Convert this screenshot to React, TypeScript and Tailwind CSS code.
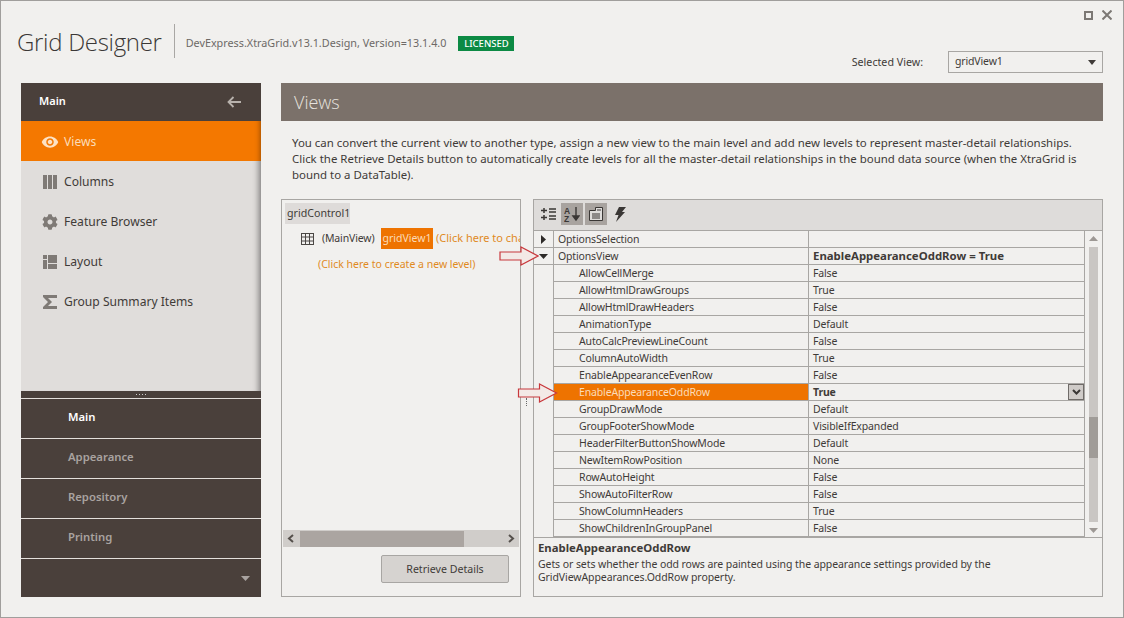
import React from "react";
import { FaCog } from "react-icons/fa";
import { MdVisibility } from "react-icons/md";

const F = "[font-family:'Noto_Sans',sans-serif]";

const rows: [string, string][] = [
  ["AllowCellMerge", "False"],
  ["AllowHtmlDrawGroups", "True"],
  ["AllowHtmlDrawHeaders", "False"],
  ["AnimationType", "Default"],
  ["AutoCalcPreviewLineCount", "False"],
  ["ColumnAutoWidth", "True"],
  ["EnableAppearanceEvenRow", "False"],
  ["EnableAppearanceOddRow", "True"],
  ["GroupDrawMode", "Default"],
  ["GroupFooterShowMode", "VisibleIfExpanded"],
  ["HeaderFilterButtonShowMode", "Default"],
  ["NewItemRowPosition", "None"],
  ["RowAutoHeight", "False"],
  ["ShowAutoFilterRow", "False"],
  ["ShowColumnHeaders", "True"],
  ["ShowChildrenInGroupPanel", "False"],
];

function Arrow({ className }: { className: string }) {
  return (
    <svg className={className} viewBox="0 0 40 20">
      <path d="M1 6H22V1L39 10L22 19V14H1Z" fill="#f3e9e6" stroke="#c8383c" strokeWidth="1.2" />
    </svg>
  );
}

const navItems = [
  {
    label: "Columns",
    icon: (
      <svg width="14" height="14" viewBox="0 0 14 14" fill="#7f7a76">
        <path d="M0 0h4v14H0zM5 0h4v14H5zM10 0h4v14h-4z" />
      </svg>
    ),
  },
  { label: "Feature Browser", icon: <FaCog className="w-[16px] h-[16px] -ml-[1px] text-[#7f7a76]" /> },
  {
    label: "Layout",
    icon: (
      <svg width="14" height="14" viewBox="0 0 14 14" fill="#7f7a76">
        <path d="M0 0h4v4H0zM5 0h9v8H5zM0 5h4v9H0zM5 9h9v5H5z" />
      </svg>
    ),
  },
  {
    label: "Group Summary Items",
    icon: (
      <svg width="14" height="14" viewBox="0 0 14 14" fill="#7f7a76">
        <path d="M0 0h14v3H5l4 4-4 4h9v3H0v-2l5-5-5-5z" />
      </svg>
    ),
  },
];

export default function App() {
  return (
    <div className={`${F} relative w-[1124px] h-[618px] overflow-hidden bg-[#f1f0ee] border border-[#a09e9c] text-[12px] text-[#3f3b38] flex flex-col`}>
      {/* title bar */}
      <div className="h-[82px] shrink-0 flex items-start pl-[16px] pr-[11px]">
        <div className="mt-[24px] text-[24px] leading-[34px] font-light text-[#3b3836] [font-family:'Open_Sans',sans-serif] tracking-[-0.3px]">Grid Designer</div>
        <div className="mt-[23px] ml-[12px] w-px h-[34px] bg-[#a9a7a4]" />
        <div className="mt-[34px] ml-[11px] text-[10.8px] leading-[16px] text-[#6d6966]">DevExpress.XtraGrid.v13.1.Design, Version=13.1.4.0</div>
        <div className="mt-[35px] ml-[12px] h-[15px] w-[56px] bg-[#0c8a44] text-white text-[9.5px] leading-[15px] font-medium text-center">LICENSED</div>
        <div className="ml-auto flex flex-col items-end w-[300px]">
          <div className="mt-[9px] flex gap-[9px] items-center pr-0">
            <div className="w-[9px] h-[9px] border-2 border-[#7c7874]" />
            <svg width="10" height="10" viewBox="0 0 10 10" stroke="#7c7874" strokeWidth="2"><path d="M0.5 0.5L9.5 9.5M9.5 0.5L0.5 9.5" /></svg>
          </div>
          <div className="mt-[31px] mr-[9px] flex items-center">
            <span className="text-[10.7px] mr-[25px] text-[#3f3b38]">Selected View:</span>
            <div className="w-[155px] h-[22px] border border-[#a8a6a3] bg-[#f1f0ee] flex items-center pl-[6px] pr-[6px] justify-between text-[10.5px] tracking-[-0.15px]">
              <span>gridView1</span>
              <svg width="8" height="5" viewBox="0 0 8 5" fill="#3f3b38"><path d="M0 0h8L4 5z" /></svg>
            </div>
          </div>
        </div>
      </div>

      {/* body */}
      <div className="flex pl-[20px] gap-[20px] h-[514px]">
        {/* sidebar */}
        <div className="w-[240px] shrink-0 flex flex-col">
          <div className="h-[38px] bg-[#4a403b] flex items-center justify-between pl-[18px] pr-[20px] text-white font-semibold text-[11px]">
            <span className="-mt-[1px]">Main</span>
            <svg width="14" height="12" viewBox="0 0 14 12" stroke="#b8b2ad" strokeWidth="1.8" fill="none"><path d="M14 6H1.5M6.5 1L1.5 6L6.5 11" /></svg>
          </div>
          <div className="h-[270px] bg-[#e0dddb] shadow-[inset_-8px_0_6px_-6px_rgba(0,0,0,.45)]">
            <div className="h-[40px] pt-[2px] bg-[#f47800] flex items-center pl-[20px] gap-[5px] text-[#fbdcb8] text-[12.1px] shadow-[inset_-6px_0_5px_-5px_rgba(120,60,0,.7)]">
              <MdVisibility className="w-[18px] h-[18px] text-[#fde2c4]" />
              <span>Views</span>
            </div>
            {navItems.map((n) => (
              <div key={n.label} className="h-[40px] pt-[2px] flex items-center text-[12.1px] text-[#403b38]">
                <div className="w-[43px] pl-[22px] flex items-center">{n.icon}</div>
                <span>{n.label}</span>
              </div>
            ))}
          </div>
          <div className="h-[206px] bg-[#4a403b] flex flex-col">
            <div className="h-[7px] shrink-0 flex justify-center items-center gap-[2px] border-b-0">
              <span className="w-px h-px bg-[#ccc]" /><span className="w-px h-px bg-[#ccc]" /><span className="w-px h-px bg-[#ccc]" /><span className="w-px h-px bg-[#ccc]" />
            </div>
            {["Main", "Appearance", "Repository", "Printing"].map((t, i) => (
              <div key={t} className={`h-[40px] shrink-0 pb-[2px] border-t border-[#e4e0dc] flex items-center pl-[47px] font-semibold text-[11.3px] ${i === 0 ? "text-white" : "text-[#a9a3a0]"}`}>{t}</div>
            ))}
            <div className="flex-1 border-t border-[#e4e0dc] flex items-center justify-end pr-[11px]">
              <svg width="9" height="5" viewBox="0 0 9 5" fill="#a9a3a0"><path d="M0 0h9L4.5 5z" /></svg>
            </div>
          </div>
        </div>

        {/* main */}
        <div className="w-[822px] shrink-0 flex flex-col">
          <div className="h-[38px] bg-[#7b716a] flex items-center pl-[13px] text-[18px] font-light text-[#e6e2de] [font-family:'Open_Sans',sans-serif]">Views</div>
          <div className="h-[78px] pl-[11px] pt-[14px] text-[11.45px] leading-[16px] text-[#3f3b38]">
            <div className="whitespace-nowrap">You can convert the current view to another type, assign a new view to the main level and add new levels to represent master-detail relationships.</div>
            <div className="whitespace-nowrap">Click the Retrieve Details button to automatically create levels for all the master-detail relationships in the bound data source (when the XtraGrid is</div>
            <div className="whitespace-nowrap">bound to a DataTable).</div>
          </div>
          <div className="flex gap-[12px] h-[398px]">
            {/* tree panel */}
            <div className="w-[240px] h-full border border-[#a8a6a3] flex flex-col text-[10.5px] overflow-hidden">
              <div className="pl-[3px] pt-[3px]">
                <div className="w-[65px] h-[21px] pt-[1px] bg-[#dedbd9] flex items-center pl-[2px] text-[10.65px]">gridControl1</div>
              </div>
              <div className="h-[21px] mt-[4px] flex items-center pl-[19px] whitespace-nowrap">
                <svg className="shrink-0" width="13" height="12" viewBox="0 0 13 12" fill="none" stroke="#4a4744"><rect x="0.5" y="0.5" width="12" height="11" /><path d="M0 4h13M0 8h13M4.5 0v12M8.5 0v12" /></svg>
                <span className="ml-[8px] w-[51px] shrink-0 tracking-[-0.15px]">(MainView)</span>
                <span className="ml-[8px] w-[52px] h-[21px] shrink-0 bg-[#ee7300] text-[#fbdcb8] flex items-center justify-center">gridView1</span>
                <span className="ml-[3px] text-[#e08a1e] text-[11px]">(Click here to change view)</span>
              </div>
              <div className="mt-[4px] pl-[36px] text-[#e08a1e] whitespace-nowrap leading-[22px]">(Click here to create a new level)</div>
              <div className="flex-1" />
              <div className="h-[17px] mx-px bg-[#d0cdca] flex items-center justify-between px-[4px]">
                <svg width="7" height="9" viewBox="0 0 7 9" fill="none" stroke="#55504c" strokeWidth="2"><path d="M6 1L2 4.5L6 8" /></svg>
                <div className="w-[164px] h-[16px] -ml-[1px] mr-[38px] bg-[#aba5a1]" />
                <svg width="7" height="9" viewBox="0 0 7 9" fill="none" stroke="#55504c" strokeWidth="2"><path d="M1 1L5 4.5L1 8" /></svg>
              </div>
              <div className="h-[49px] flex justify-end items-start pt-[8px] pr-[11px]">
                <div className="w-[128px] h-[28px] pt-[2px] rounded-[2px] bg-[#d6d3d0] border border-[#a8a6a3] flex items-center justify-center text-[10.6px]">Retrieve Details</div>
              </div>
            </div>

            {/* property grid */}
            <div className="w-[570px] h-full border border-[#a8a6a3] flex flex-col text-[10.5px] overflow-hidden">
              <div className="h-[30px] shrink-0 bg-[#dedcda] flex items-center pl-[3px] pb-[2px] gap-[2px]">
                <div className="w-[22px] h-[22px] flex items-center justify-center">
                  <svg width="15" height="14" viewBox="0 0 15 14" stroke="#3a3735" strokeWidth="1.5" fill="none"><path d="M0 3.5h6M3 1v5M0 10.5h6M3 8v5M8 2h7M8 5h7M8 9h7M8 12h7" /></svg>
                </div>
                <div className="w-[22px] h-[22px] bg-[#a8a39f] flex items-center justify-center">
                  <svg width="16" height="16" viewBox="0 0 16 16"><text x="0" y="7.5" fontSize="8.5" fontWeight="700" fill="#3a3735" fontFamily="Liberation Sans">A</text><text x="0" y="15.5" fontSize="8.5" fontWeight="700" fill="#3a3735" fontFamily="Liberation Sans">Z</text><path d="M12 1v12M9 10l3 4 3-4z" stroke="#3a3735" strokeWidth="1.4" fill="#3a3735" /></svg>
                </div>
                <div className="w-[22px] h-[22px] bg-[#a8a39f] flex items-center justify-center">
                  <svg width="16" height="16" viewBox="0 0 16 16" fill="none" stroke="#3a3735"><path d="M1.5 4.5h6v-3h7v13h-13z" fill="#dedcda" /><path d="M4 8h8M4 10h8M4 12h8M9 4h4" /></svg>
                </div>
                <div className="w-[22px] h-[22px] flex items-center justify-center">
                  <svg width="12" height="15" viewBox="0 0 12 15" fill="#3a3735"><path d="M5 0h7L8 5h3L2 15l2.5-7H1z" /></svg>
                </div>
              </div>
              <div className="h-[307px] shrink-0 flex border-t border-[#a8a6a3]">
                <div className="w-[551px] shrink-0 flex flex-col tracking-[-0.15px]">
                  <div className="h-[17px] shrink-0 flex border-b border-[#a8a6a3]">
                    <div className="w-[20px] shrink-0 flex items-center justify-center border-r border-[#a8a6a3]">
                      <svg width="5" height="9" viewBox="0 0 5 9" fill="#2d2a28"><path d="M0 0l5 4.5L0 9z" /></svg>
                    </div>
                    <div className="w-[255px] shrink-0 pl-[4px] border-r border-[#a8a6a3] leading-[16px]">OptionsSelection</div>
                    <div className="flex-1 border-r border-[#a8a6a3]" />
                  </div>
                  <div className="h-[17px] shrink-0 flex border-b border-[#a8a6a3]">
                    <div className="w-[20px] shrink-0 flex items-center justify-center border-r border-[#a8a6a3]">
                      <svg width="9" height="5" viewBox="0 0 9 5" fill="#2d2a28"><path d="M0 0h9L4.5 5z" /></svg>
                    </div>
                    <div className="w-[255px] shrink-0 pl-[4px] border-r border-[#a8a6a3] leading-[16px]">OptionsView</div>
                    <div className="flex-1 pl-[4px] border-r border-[#a8a6a3] font-bold leading-[16px] text-[11.4px] tracking-normal">EnableAppearanceOddRow = True</div>
                  </div>
                  {rows.map(([n, v]) => {
                    const sel = n === "EnableAppearanceOddRow";
                    return (
                      <div key={n} className="h-[17px] shrink-0 flex">
                        <div className="w-[20px] shrink-0 border-r border-[#a8a6a3]" />
                        <div className={`w-[255px] shrink-0 pl-[25px] border-r border-b border-[#a8a6a3] leading-[16px] ${sel ? "bg-[#ee7300] text-[#fbdcb8]" : ""}`}>{n}</div>
                        <div className={`flex-1 pl-[4px] border-r border-b border-[#a8a6a3] leading-[16px] flex items-center justify-between ${sel ? "font-bold" : ""}`}>
                          <span>{v}</span>
                          {sel && (
                            <span className="w-[16px] h-[16px] bg-[#cfcbc8] border border-[#6f6b68] flex items-center justify-center">
                              <svg width="9" height="6" viewBox="0 0 9 6" fill="none" stroke="#3a3735" strokeWidth="2"><path d="M1 1l3.5 3.5L8 1" /></svg>
                            </span>
                          )}
                        </div>
                      </div>
                    );
                  })}
                </div>
                <div className="flex-1 flex flex-col items-center pt-[5px] pb-[4px]">
                  <svg width="9" height="5" viewBox="0 0 9 5" fill="#9d9894"><path d="M4.5 0L9 5H0z" /></svg>
                  <div className="flex-1 w-[9px] mt-[6px] mb-[6px] bg-[#c9c6c3] flex flex-col">
                    <div className="h-[170px]" />
                    <div className="h-[41px] bg-[#a09c98]" />
                  </div>
                  <svg width="9" height="5" viewBox="0 0 9 5" fill="#9d9894"><path d="M0 0h9L4.5 5z" /></svg>
                </div>
              </div>
              <div className="flex-1 border-t border-[#a8a6a3] pl-[4px] pt-[2px] text-[10.5px] leading-[13px] tracking-[-0.08px]">
                <div className="font-bold leading-[16px] mb-[2px] text-[11.35px] tracking-normal">EnableAppearanceOddRow</div>
                <div>Gets or sets whether the odd rows are painted using the appearance settings provided by the</div>
                <div>GridViewAppearances.OddRow property.</div>
              </div>
            </div>
          </div>
        </div>
      </div>

      {/* overlays */}
      <Arrow className="absolute left-[498px] top-[245px] w-[40px] h-[20px]" />
      <Arrow className="absolute left-[516px] top-[382px] w-[41px] h-[20px]" />
      <div className="absolute left-[525px] top-[397px] w-px h-[8px] border-l border-dotted border-[#666]" />
    </div>
  );
}
